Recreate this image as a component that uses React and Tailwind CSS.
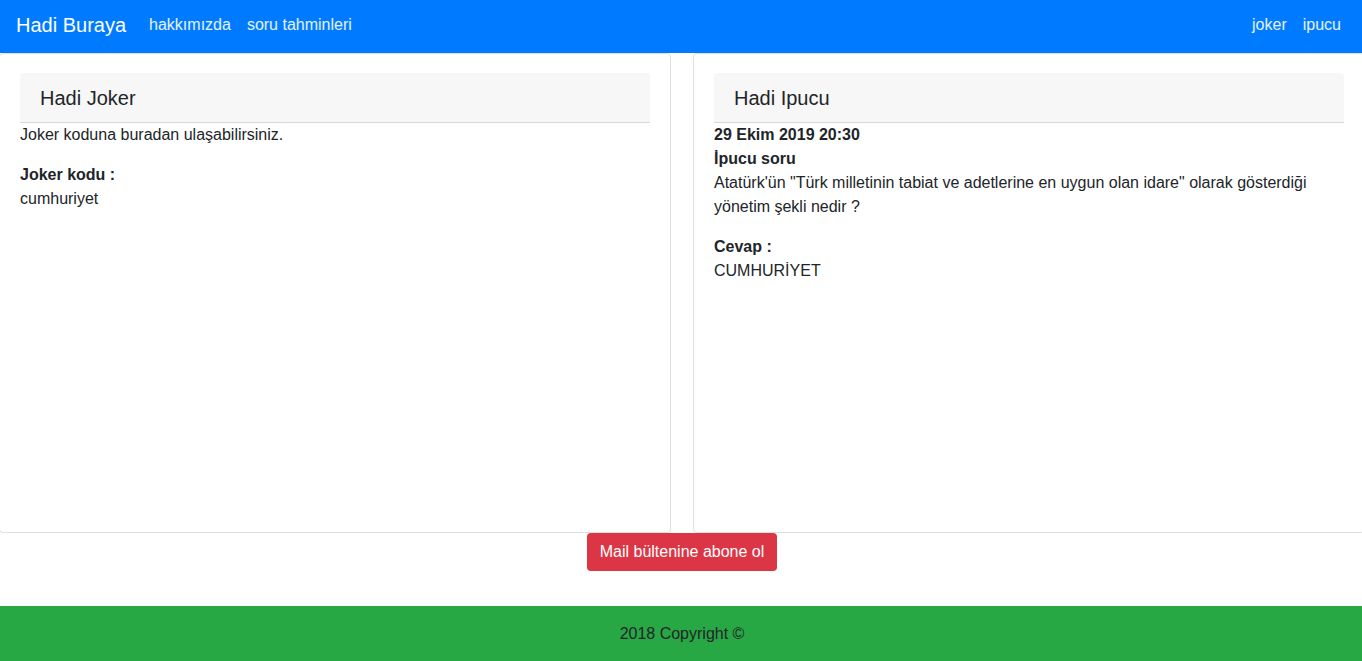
import React from 'react';

const navLinks = ['hakkımızda', 'soru tahminleri'];
const rightLinks = ['joker', 'ipucu'];

const Card = ({ title, children }) => (
  <div className="w-[672px] h-[480px] shrink-0 border border-[#dfdfdf] rounded-[4px] bg-white px-5 pt-[19px]">
    <div className="bg-[#f7f7f7] border-b border-[#d8d8d8] rounded-t-[3px] px-5 pt-[13px] pb-3 text-[20px] leading-[24px] text-[#212529]">
      {title}
    </div>
    <div className="text-[16px] leading-[24px] text-[#212529]">{children}</div>
  </div>
);

export default function App() {
  return (
    <div className="min-h-[661px] bg-white flex flex-col overflow-hidden" style={{ fontFamily: '"Liberation Sans", Arial, sans-serif' }}>
      {/* Navbar */}
      <nav className="h-[53px] bg-[#007bff] flex items-center px-4 pb-[4px]">
        <span className="text-white text-[20px] leading-[30px] mr-[23px]">Hadi Buraya</span>
        <div className="flex gap-4">
          {navLinks.map((l) => (
            <a key={l} className="text-white/90 text-[16px] leading-[24px]">{l}</a>
          ))}
        </div>
        <div className="ml-auto flex gap-4 pr-[5px]">
          {rightLinks.map((l) => (
            <a key={l} className="text-white/90 text-[16px] leading-[24px]">{l}</a>
          ))}
        </div>
      </nav>

      {/* Cards */}
      <div className="flex gap-[22px] w-[1366px] -ml-px">
        <Card title="Hadi Joker">
          <p>Joker koduna buradan ulaşabilirsiniz.</p>
          <p className="mt-4 font-bold">Joker kodu :</p>
          <p>cumhuriyet</p>
        </Card>
        <Card title="Hadi Ipucu">
          <p className="font-bold">29 Ekim 2019 20:30</p>
          <p className="font-bold">İpucu soru</p>
          <p>Atatürk'ün "Türk milletinin tabiat ve adetlerine en uygun olan idare" olarak gösterdiği yönetim şekli nedir ?</p>
          <p className="mt-4 font-bold">Cevap :</p>
          <p>CUMHURİYET</p>
        </Card>
      </div>

      {/* Subscribe */}
      <div className="flex justify-center pl-[2px] h-[73px]">
        <button className="h-[38px] px-[13px] rounded-[4px] bg-[#dc3545] text-white text-[16px] leading-[24px]">
          Mail bültenine abone ol
        </button>
      </div>

      {/* Footer */}
      <footer className="h-[55px] bg-[#28a745] flex items-center justify-center pl-[2px] text-[16px] text-[#212529]">
        2018 Copyright ©
      </footer>
    </div>
  );
}
